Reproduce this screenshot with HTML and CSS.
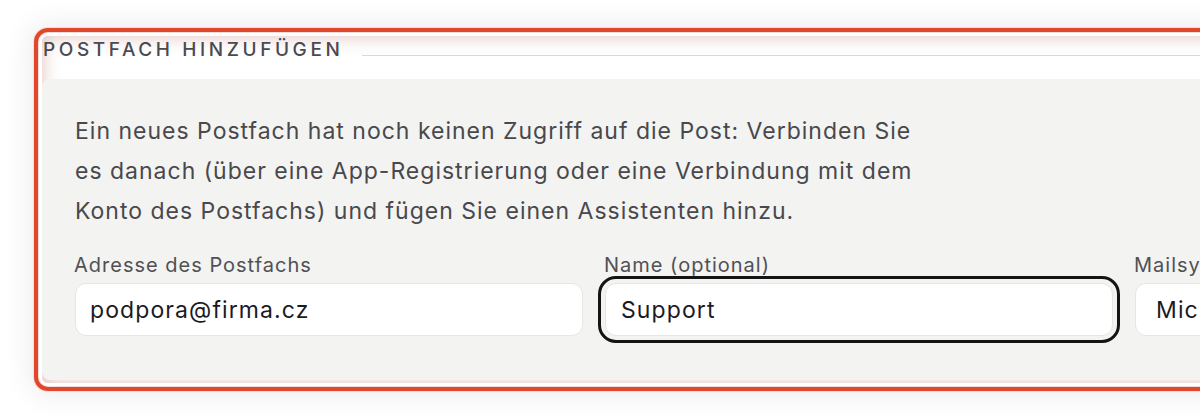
FILE: index.html
```html
<!DOCTYPE html>
<html lang="de">
<head>
  <meta charset="UTF-8">
  <meta name="viewport" content="width=device-width, initial-scale=1.0">
  <title>Postfach hinzufügen</title>
  <link rel="stylesheet" href="styles.css">
</head>
<body>
<section class="mailbox-add">
  <!--Überschrift-->
  <div class="section-head">
    <h2>Postfach hinzufügen</h2>
    <div class="rule"></div>
  </div>

  <div class="card">
    <p class="hint">
      Ein neues Postfach hat noch keinen Zugriff auf die Post: Verbinden Sie
      es danach (über eine App-Registrierung oder eine Verbindung mit dem
      Konto des Postfachs) und fügen Sie einen Assistenten hinzu.
    </p>

    <!--Formular-->
    <div class="fields">
      <label class="field">
        <span class="label">Adresse des Postfachs</span>
        <input type="text" class="input" value="podpora@firma.cz">
      </label>
      <label class="field">
        <span class="label">Name (optional)</span>
        <input type="text" class="input focused" value="Support">
      </label>
      <label class="field">
        <span class="label">Mailsystem</span>
        <select class="input select">
          <option>Microsoft 365</option>
        </select>
      </label>
    </div>
  </div>
</section>
</body>
</html>
```

FILE: styles.css
```css
* {
  margin: 0;
  padding: 0;
  box-sizing: border-box;
}

html {
  overflow: hidden;
}

body {
  min-height: 100vh;
  background: #ffffff;
  font-family: Inter, "Noto Sans", sans-serif;
  padding: 36px 0 0 42px;
}

/*高亮的区块*/
.mailbox-add {
  width: 1760px;
  height: 347px;
  outline: 4px solid #e2472b;
  outline-offset: 4px;
  border-radius: 6px;
  box-shadow: inset 0 0 18px rgba(185, 110, 100, .45),
              0 0 0 3px rgba(255, 255, 255, 1),
              0 0 0 9px rgba(226, 71, 43, .12),
              0 0 28px 12px rgba(0, 0, 0, .08);
}

.section-head {
  display: flex;
  align-items: baseline;
  padding: 1px 0 0 1px;
}

.section-head h2 {
  font-size: 19px;
  line-height: 25px;
  font-weight: 500;
  letter-spacing: 3.6px;
  text-transform: uppercase;
  color: #4a4a50;
}

.section-head .rule {
  flex: 1;
  height: 1px;
  margin-left: 19px;
  background: #d9d9d9;
}

.card {
  margin-top: 17px;
  background: #f3f3f1;
  border-radius: 8px;
  padding: 32px 33px 44px;
}

.hint {
  max-width: 850px;
  font-size: 23px;
  line-height: 40px;
  letter-spacing: 1px;
  color: #48484d;
}

.fields {
  display: flex;
  gap: 22px;
  margin-top: 22px;
}

.field {
  display: flex;
  flex-direction: column;
  width: 508px;
  flex: none;
}

.field .label {
  font-size: 20px;
  line-height: 25px;
  letter-spacing: 1px;
  color: #505055;
  margin-left: -1px;
}

.field .input {
  margin-top: 5px;
  height: 53px;
  padding: 0 14px;
  border: 1px solid #e6e6e3;
  border-radius: 11px;
  background: #ffffff;
  font-family: inherit;
  font-size: 23px;
  letter-spacing: 1.1px;
  color: #1b1b1f;
}

.field .input.focused {
  outline: 3px solid #141414;
  outline-offset: 4px;
  padding-left: 15px;
}

.field .select {
  appearance: none;
  padding-left: 20px;
}
```
